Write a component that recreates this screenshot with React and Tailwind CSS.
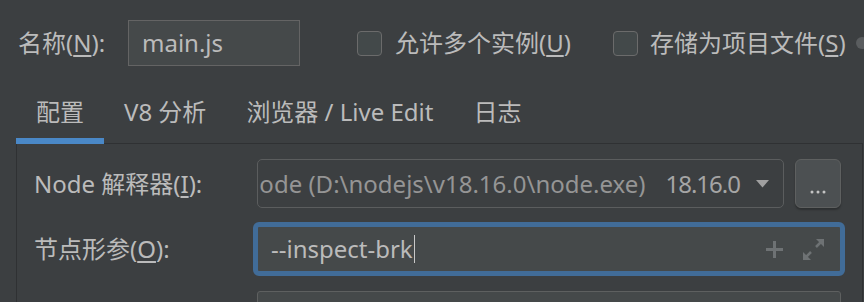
import React from "react";

const font = { fontFamily: '"Noto Sans", "Noto Sans CJK SC", sans-serif' };

function Checkbox() {
  return <div className="w-[25px] h-[25px] rounded-[4px] border-[1.5px] border-[#6b6b6b] bg-[#43494a] shrink-0" />;
}

function Tab({ label, active }) {
  return (
    <div
      className={
        "h-[64px] px-[20px] pt-[6px] flex items-center border-b-[6px] whitespace-nowrap " +
        (active ? "border-[#4a88c7]" : "border-transparent")
      }
    >
      {label}
    </div>
  );
}

export default function App() {
  return (
    <div
      className="w-[864px] h-[302px] bg-[#3c3f41] overflow-hidden text-[#bbbbbb] text-[24px] leading-none"
      style={font}
    >
      {/* Top row */}
      <div className="flex items-center h-[46px] mt-[20px] pl-[18px] whitespace-nowrap">
        <div className="w-[110px] shrink-0">
          名称(<span className="underline underline-offset-[3px]">N</span>):
        </div>
        <div className="w-[172px] h-[46px] shrink-0 border border-[#646464] bg-[#45494a] flex items-center pl-[13px]">
          main.js
        </div>
        <div className="ml-[57px] w-[256px] shrink-0 flex items-center">
          <Checkbox />
          <span className="ml-[13px]">
            允许多个实例(<span className="underline underline-offset-[3px]">U</span>)
          </span>
        </div>
        <div className="flex items-center shrink-0">
          <Checkbox />
          <span className="ml-[12px]">
            存储为项目文件(<span className="underline underline-offset-[3px]">S</span>)
          </span>
        </div>
        <div className="ml-[10px] w-[12px] h-[12px] rounded-full bg-[#5a5d5f] shrink-0" />
      </div>

      {/* Tabs */}
      <div className="relative z-10 flex mt-[14px] ml-[16px]">
        <Tab label="配置" active />
        <Tab label="V8 分析" />
        <Tab label="浏览器 / Live Edit" />
        <Tab label="日志" />
      </div>

      {/* Panel */}
      <div className="-mt-px ml-[16px] w-[847px] h-[200px] border-t border-l border-r border-[#2f3133] pt-[15px]">
        {/* Row 1 */}
        <div className="flex items-center h-[49px]">
          <div className="w-[240px] pl-[17px] shrink-0 whitespace-nowrap">
            Node 解释器(<span className="underline underline-offset-[3px]">I</span>):
          </div>
          <div className="w-[527px] h-[49px] shrink-0 rounded-[5px] border border-[#5b5d5e] overflow-hidden flex items-center justify-end pr-[14px] whitespace-nowrap">
            <span className="text-[#959595] shrink-0">node (D:\nodejs\v18.16.0\node.exe)</span>
            <span className="text-[#a5a5a5] ml-[20px] shrink-0 tracking-[-1px]">18.16.0</span>
            <svg width="13" height="8" viewBox="0 0 13 8" className="ml-[16px] shrink-0">
              <path d="M0 0 H13 L6.5 7.5 Z" fill="#a0a0a0" />
            </svg>
          </div>
          <div className="ml-[11px] w-[46px] h-[49px] shrink-0 rounded-[6px] border border-[#5e6060] bg-[#4c5052] shadow-[0_2px_2px_rgba(0,0,0,0.25)] flex items-center justify-center">
            <svg width="16" height="4" viewBox="0 0 16 4" className="mt-[16px]">
              <circle cx="2" cy="2" r="1.5" fill="#c4c4c4" />
              <circle cx="8" cy="2" r="1.5" fill="#c4c4c4" />
              <circle cx="14" cy="2" r="1.5" fill="#c4c4c4" />
            </svg>
          </div>
        </div>

        {/* Row 2 */}
        <div className="flex items-center h-[54px] mt-[14px]">
          <div className="w-[236px] pl-[17px] shrink-0 whitespace-nowrap">
            节点形参(<span className="underline underline-offset-[3px]">O</span>):
          </div>
          <div className="w-[592px] h-[54px] shrink-0 rounded-[6px] border-[5px] border-[#416c98] bg-[#45494a] flex items-center pl-[13px] pr-[15px]">
            <span className="whitespace-nowrap">--inspect-brk</span>
            <span className="w-px h-[28px] bg-[#c8c8c8] ml-px" />
            <div className="flex-1" />
            <svg width="19" height="19" viewBox="0 0 19 19" className="shrink-0">
              <path d="M9.5 1 V18 M1 9.5 H18" stroke="#6e7274" strokeWidth="3" />
            </svg>
            <svg width="23" height="23" viewBox="0 0 23 23" className="ml-[18px] shrink-0">
              <path d="M14 9 L20 3" stroke="#6e7274" strokeWidth="2.5" />
              <path d="M14 1 H22 V9 Z" fill="#6e7274" />
              <path d="M3 20 L9 14" stroke="#6e7274" strokeWidth="2.5" />
              <path d="M1 14 V22 H9 Z" fill="#6e7274" />
            </svg>
          </div>
        </div>

        {/* Row 3 */}
        <div className="flex mt-[15px]">
          <div className="w-[240px] shrink-0" />
          <div className="w-[584px] h-[46px] shrink-0 rounded-[3px] border border-[#5e6060] bg-[#45494a]" />
        </div>
      </div>
    </div>
  );
}
